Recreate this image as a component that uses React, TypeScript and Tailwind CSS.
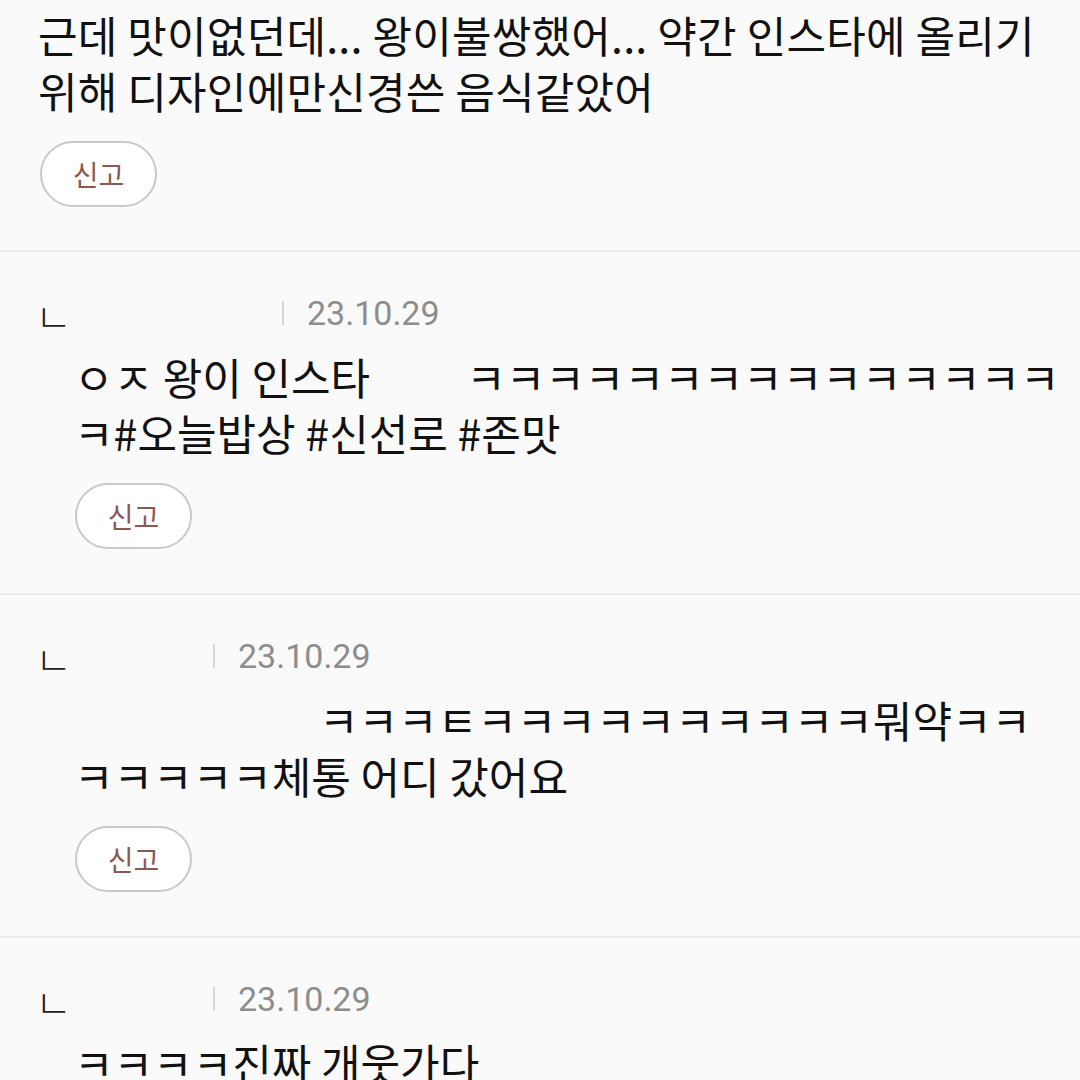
const FONT = { fontFamily: '"Noto Sans CJK KR", "Noto Sans", sans-serif' };

function ReportButton() {
  return (
    <button className="mt-[23px] flex h-[66px] w-[117px] items-center justify-center rounded-full border-2 border-[#c9c9c9] bg-white text-[28px] leading-none text-[#8a5a52]">
      신고
    </button>
  );
}

function Meta({ nameWidth }: { nameWidth: number }) {
  return (
    <div className="flex h-[40px] items-center">
      <span className="w-[35px] shrink-0" />
      <span className="inline-block w-[28px] pt-[4px] text-[40px] font-light leading-none text-[#222]">ㄴ</span>
      <span className="shrink-0" style={{ width: nameWidth }} />
      <span className="h-[24px] w-[2px] bg-[#d6d6d6]" />
      <span
        className="ml-[23px] text-[34px] leading-none text-[#8d8d8d]"
        style={{ fontFamily: 'Roboto, "Noto Sans", sans-serif' }}
      >
        23.10.29
      </span>
    </div>
  );
}

type Reply = {
  nameWidth: number;
  lines: React.ReactNode[];
  report?: boolean;
};

const REPLIES: Reply[] = [
  {
    nameWidth: 219,
    lines: [
      <>
        ㅇㅈ 왕이 인스타<span className="inline-block w-[96px]" />ㅋㅋㅋㅋㅋㅋㅋㅋㅋㅋㅋㅋㅋㅋㅋ
      </>,
      <>ㅋ#오늘밥상 #신선로 #존맛</>,
    ],
    report: true,
  },
  {
    nameWidth: 150,
    lines: [
      <>
        <span className="inline-block w-[245px]" />ㅋㅋㅋㅌㅋㅋㅋㅋㅋㅋㅋㅋㅋㅋ뭐약ㅋㅋ
      </>,
      <>ㅋㅋㅋㅋㅋ체통 어디 갔어요</>,
    ],
    report: true,
  },
  {
    nameWidth: 150,
    lines: [<>ㅋㅋㅋㅋ진짜 개웃가다</>],
  },
];

export default function App() {
  return (
    <div className="h-[1080px] w-[1080px] overflow-hidden bg-[#fafafa] text-[#111]" style={FONT}>
      {/* tail of the parent comment */}
      <div className="border-b-2 border-[#ebebeb] px-[38px] pt-[6px] pb-[43px]">
        <p className="whitespace-nowrap text-[43px] leading-[56px] tracking-[0.2px]">
          근데 맛이없던데... 왕이불쌍했어... 약간 인스타에 올리기
        </p>
        <p className="whitespace-nowrap text-[43px] leading-[56px] tracking-[0.2px]">위해 디자인에만신경쓴 음식같았어</p>
        <div className="ml-[2px]">
          <ReportButton />
        </div>
      </div>

      {REPLIES.map((r, i) => (
        <div key={i} className="border-b-2 border-[#ebebeb] pt-[41px] pb-[44px]">
          <Meta nameWidth={r.nameWidth} />
          <div className="mt-[15px] pl-[74px]">
            {r.lines.map((line, j) => (
              <p key={j} className="whitespace-nowrap text-[43px] leading-[56px]">
                {line}
              </p>
            ))}
            {r.report && (
              <div className="ml-[1px]">
                <ReportButton />
              </div>
            )}
          </div>
        </div>
      ))}
    </div>
  );
}
